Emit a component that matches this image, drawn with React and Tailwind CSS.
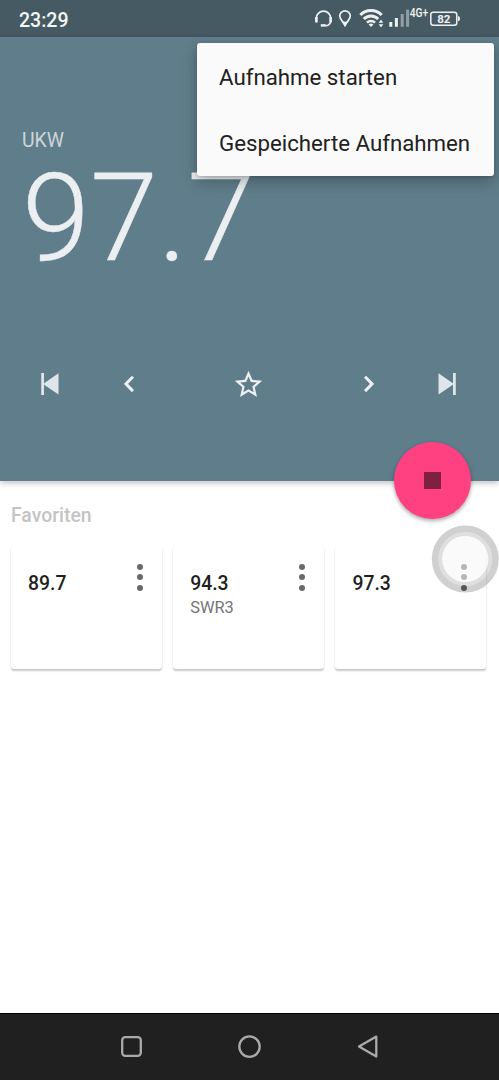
const FAVORITES = [
  { freq: '89.7', name: '' },
  { freq: '94.3', name: 'SWR3' },
  { freq: '97.3', name: '' },
];

const MENU_ITEMS = ['Aufnahme starten', 'Gespeicherte Aufnahmen'];

function StatusIcons() {
  return (
    <svg width="150" height="37" viewBox="310 0 150 37" fill="none" stroke="#eef1f2" aria-hidden="true">
      {/* headset */}
      <path d="M316.2 18.5a7.3 7.3 0 0 1 14.6 0" strokeWidth="1.7" />
      <path d="M316.4 17v5.6M330.6 17v5.6" strokeWidth="2.7" />
      <path d="M330.6 22c-.6 2.4-2.2 3.6-5 3.8" strokeWidth="1.5" />
      <path d="M320.8 25.4h5" strokeWidth="2.5" />

      {/* location */}
      <path d="M345 25c-1.4-3-5.3-5.3-5.3-8.9a5.3 5.3 0 0 1 10.6 0c0 3.6-3.9 5.9-5.3 8.9z" strokeWidth="1.7" />
      <path d="M341 20.5q4 2.4 8 0L345 27z" fill="#eef1f2" stroke="none" />

      {/* wifi */}
      <path d="M360.3 15a15 15 0 0 1 21.4 0" strokeWidth="3" />
      <path d="M363.8 19a10 10 0 0 1 14.4 0" strokeWidth="2.9" />
      <path d="M367 22.6a5.7 5.7 0 0 1 8 0" strokeWidth="2.6" />
      <path d="M368.6 24.6a3.5 3.5 0 0 1 4.8 0L371 27z" fill="#eef1f2" stroke="none" />
      <path d="M378.7 22.8l2.3-3.2 2.3 3.2zM378.7 24.2l2.3 3.2 2.3-3.2z" fill="#eef1f2" stroke="none" />

      {/* signal */}
      <g fill="#eef1f2" stroke="none">
        <path d="M389.3 22h3v4.8h-3zM394.9 18h3v8.8h-3z" />
        <path d="M400.7 14h3v12.8h-3zM406.1 9.8h3v17h-3z" opacity=".45" />
      </g>
      <text x="409.8" y="17" textLength="18.5" lengthAdjust="spacingAndGlyphs" fill="#eef1f2" stroke="none" fontFamily="Roboto, sans-serif" fontSize="12" fontWeight="500">4G+</text>

      {/* battery */}
      <rect x="430.8" y="12.2" width="26" height="13.1" rx="2.5" strokeWidth="1.5" />
      <path d="M458 16.3h.6q1.4 0 1.4 2.4t-1.4 2.4h-.6z" fill="#eef1f2" stroke="none" />
      <text x="443.8" y="22.8" textAnchor="middle" fill="#eef1f2" stroke="none" fontFamily="Roboto, sans-serif" fontSize="11.5" fontWeight="700">82</text>
    </svg>
  );
}

function StatusBar() {
  return (
    <div className="flex h-[37px] items-center bg-[#465a64] pl-[19px]">
      <span className="flex-1 pt-[4px] text-[19.5px] leading-none font-medium text-[#f4f6f7]">23:29</span>
      <div className="w-[189px]">
        <StatusIcons />
      </div>
    </div>
  );
}

function SkipIcon({ flip }) {
  return (
    <svg width="18" height="22" viewBox="0 0 18 22" fill="#dfe5e8" className={flip ? '-scale-x-100' : ''}>
      <path d="M.2 0h2.8v22H.2z" />
      <path d="M2 11L17.5.3v21.3z" />
    </svg>
  );
}

function ChevronIcon({ flip }) {
  return (
    <svg width="10" height="18" viewBox="0 0 10 18" fill="none" stroke="#ecf0f2" strokeWidth="3" className={flip ? '-scale-x-100' : ''}>
      <path d="M9 1.7L1.9 8.9 9 16.1" />
    </svg>
  );
}

function Controls() {
  return (
    <div className="absolute inset-x-0 top-[333px] grid h-[28px] grid-cols-[90px_78px_160px_80px_91px] grid-rows-[28px] items-center">
      <button aria-label="Vorheriger Sender" className="flex justify-center pl-[10px]"><SkipIcon /></button>
      <button aria-label="Zurück" className="flex justify-center"><ChevronIcon /></button>
      <button aria-label="Favorit" className="flex justify-center pl-px">
        <svg width="33" height="33" viewBox="0 0 24 24" fill="#ecf0f2">
          <path d="M22 9.24l-7.19-.62L12 2 9.19 8.63 2 9.24l5.46 4.73L5.82 21 12 17.27 18.18 21l-1.63-7.03L22 9.24zM12 15.4l-3.76 2.27 1-4.28-3.32-2.88 4.38-.38L12 6.1l1.71 4.04 4.38.38-3.32 2.88 1 4.28L12 15.4z" />
        </svg>
      </button>
      <button aria-label="Weiter" className="flex justify-center pl-px"><ChevronIcon flip /></button>
      <button aria-label="Nächster Sender" className="flex justify-center pr-[13px]"><SkipIcon flip /></button>
    </div>
  );
}

function PopupMenu() {
  return (
    <ul className="absolute top-[43px] left-[197px] h-[133px] w-[296.5px] rounded-[3px] bg-[#fafafa] pt-px shadow-[0_6px_15px_rgba(0,0,0,0.25),0_1px_3px_rgba(0,0,0,0.15)]">
      {MENU_ITEMS.map(item => (
        <li key={item} className="flex h-[66.5px] items-center pl-[22px] text-[22.25px] whitespace-nowrap text-[#212121]">
          <span>{item}</span>
        </li>
      ))}
    </ul>
  );
}

function FavoriteCard({ freq, name }) {
  return (
    <div className="flex h-[122px] justify-between rounded-[3px] bg-white pl-[17px] shadow-[0_1.5px_2px_rgba(0,0,0,0.2),0_1px_1px_rgba(0,0,0,0.05)]">
      <div className="pt-[24px]">
        <p className="text-[19.4px] leading-[25px] font-medium text-[#1f1f1f]">{freq}</p>
        {name && <p className="text-[16.4px] leading-[24px] text-[#757575]">{name}</p>}
      </div>
      <button aria-label="Optionen" className="mt-[17px] mr-[19px] flex h-[27px] flex-col justify-between">
        <span className="size-[6px] rounded-full bg-[#696969]" />
        <span className="size-[6px] rounded-full bg-[#696969]" />
        <span className="size-[6px] rounded-full bg-[#696969]" />
      </button>
    </div>
  );
}

function NavBar() {
  return (
    <nav className="grid h-[67px] grid-cols-[190px_119px_190px] items-center border-t border-black bg-[#202020]">
      <svg width="22" height="22" viewBox="0 0 22 22" fill="none" stroke="#aaaaaa" strokeWidth="2.3" className="ml-[120px]">
        <rect x="2.2" y="1.2" width="18.6" height="18.6" rx="3" />
      </svg>
      <svg width="24" height="24" viewBox="0 0 24 24" fill="none" stroke="#aaaaaa" strokeWidth="2.3" className="ml-[47px]">
        <circle cx="12.5" cy="11.6" r="10.2" />
      </svg>
      <svg width="22" height="24" viewBox="0 0 22 24" fill="none" stroke="#aaaaaa" strokeWidth="2.3" strokeLinejoin="round" className="ml-[48px]">
        <path d="M19.3 1.6v20L2 11.6z" />
      </svg>
    </nav>
  );
}

export default function App() {
  return (
    <div className="relative flex h-[1080px] w-[499px] flex-col overflow-hidden bg-white font-['Roboto',sans-serif]">
      <StatusBar />

      <header className="relative h-[443.5px] bg-[#607d8b] shadow-[0_2px_6px_rgba(0,0,0,0.25)]">
        <div className="pt-[92px] pl-[22px]">
          <p className="text-[19.4px] leading-[24px] text-[#ccd5d9]">UKW</p>
          <p className="mt-[13px] text-[122.5px] leading-[104px] font-light text-[#ebeff1] [-webkit-text-stroke:0.4px_#ebeff1]">97.7</p>
        </div>
        <Controls />
        <button aria-label="Stopp" className="absolute top-[405px] right-[28px] flex size-[77px] items-center justify-center rounded-full bg-[#ff4081] shadow-[0_2px_4px_rgba(0,0,0,0.35)]">
          <span className="size-[17px] bg-[#80203f]" />
        </button>
      </header>

      <main className="flex-1 px-[11px] pt-[23px]">
        <h2 className="text-[19.4px] leading-[24px] font-medium text-[#c4c4c4]">Favoriten</h2>
        <div className="mt-[19px] grid grid-cols-[151px_151px_151px] gap-[11.2px]">
          {FAVORITES.map(fav => (
            <FavoriteCard key={fav.freq} {...fav} />
          ))}
        </div>
      </main>

      <NavBar />
      <PopupMenu />

      {/* floating assist button */}
      <svg width="68" height="68" viewBox="0 0 68 68" fill="none" className="absolute top-[525px] left-[431px]">
        <circle cx="34.3" cy="34" r="30.25" stroke="#000000" strokeOpacity=".185" strokeWidth="6.5" />
        <circle cx="34.3" cy="34" r="25" stroke="#000000" strokeOpacity=".125" strokeWidth="4" />
        <circle cx="34.3" cy="34" r="23" fill="#f6f6f6" fillOpacity=".55" />
      </svg>
    </div>
  );
}
